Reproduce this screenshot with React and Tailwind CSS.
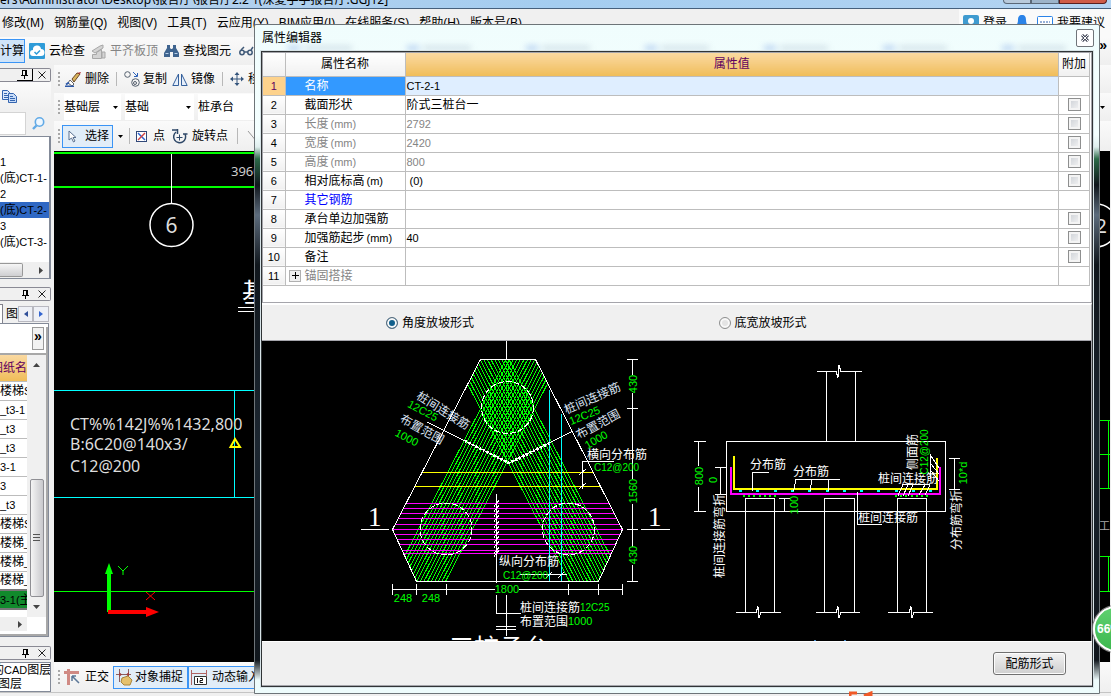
import { useState } from 'react';

const properties = [
  { name: '名称', value: 'CT-2-1', selected: true },
  { name: '截面形状', value: '阶式三桩台一', extra: true },
  { name: '长度', unit: '(mm)', value: '2792', extra: true, muted: true },
  { name: '宽度', unit: '(mm)', value: '2420', extra: true, muted: true },
  { name: '高度', unit: '(mm)', value: '800', extra: true, muted: true },
  { name: '相对底标高', unit: '(m)', value: ' (0)', extra: true },
  { name: '其它钢筋', value: '', link: true },
  { name: '承台单边加强筋', value: '', extra: true },
  { name: '加强筋起步', unit: '(mm)', value: '40', extra: true },
  { name: '备注', value: '', extra: true },
  { name: '锚固搭接', value: '', muted: true, expandable: true },
];

const menus = ['修改(M)', '钢筋量(Q)', '视图(V)', '工具(T)', '云应用(Y)', 'BIM应用(I)', '在线服务(S)', '帮助(H)', '版本号(B)'];
const elements = ['1', '(底)CT-1-', '2', '(底)CT-2-', '3', '(底)CT-3-'];
const sheets = ['楼梯S', '_t3-1', '_t3', '_t3', '3-1', '3', '_t3', '楼梯S', '楼梯_', '楼梯_', '楼梯_', '3-1(主'];

// Latin runs are set a size smaller than the Chinese ones
function Mixed({ children }) {
  return children.split(/([\x20-\x7e]+)/).filter(Boolean).map((part, i) =>
    /^[\x20-\x7e]+$/.test(part)
      ? <span key={i} className="text-[11px] whitespace-pre">{part}</span>
      : <span key={i}>{part}</span>
  );
}

function Grip() {
  return (
    <span className="flex flex-col gap-[2px] shrink-0">
      {[0, 1, 2, 3].map(i => <span key={i} className="w-[2px] h-[2px] bg-[#a8a8a8]" />)}
    </span>
  );
}

function Caret() {
  return <svg width="5" height="3" viewBox="0 0 5 3" className="shrink-0"><path d="M0 0h5L2.500 3z" fill="#000" /></svg>;
}

function PanelHeader({ boxed }) {
  return (
    <div className="h-[14px] shrink-0 flex justify-end items-center gap-[5px] pr-1 border border-l-0 border-[#8a8a94] rounded-r-[2px] bg-[#f0f0f0]">
      <button aria-label="固定" className={boxed ? 'w-4 h-3 flex items-center justify-center border-r border-b border-black' : 'w-4 h-3 flex items-center justify-center'}>
        <svg width="9" height="9" viewBox="0 0 9 9" stroke="#000" fill="none" shapeRendering="crispEdges">
          <path d="M2.500 5V.5h4V5M5.500 1v4M1 5.500h7M4.500 6v3" />
        </svg>
      </button>
      <button aria-label="关闭" className="w-2 h-3 flex items-center">
        <svg width="8" height="8" viewBox="0 0 8 8" stroke="#222"><path d="M.5.5l7 7M7.500.5l-7 7" /></svg>
      </button>
    </div>
  );
}

function Sidebar() {
  return (
    <aside className="w-[51px] shrink-0 flex flex-col pt-[3px] bg-[#f0f0f0] overflow-hidden">
      <PanelHeader boxed />
      <div className="h-7 shrink-0 flex items-center pl-[2px] bg-gradient-to-b from-[#fbfbfb] to-[#f0f0f0]">
        <button aria-label="复制构件">
          <svg width="15" height="13" viewBox="0 0 15 13" stroke="#3465b0">
            <path d="M.5.5h5l2 2v7h-7z" fill="#dbe8fb" /><path d="M2 3.500h3M2 5.500h4M2 7.500h4" />
            <path d="M6.500 3.500h5l3 3v6h-8z" fill="#c8dcf8" /><path d="M8 6.500h3M8 8.500h5M8 10.500h5" />
          </svg>
        </button>
      </div>
      <div className="h-[26px] shrink-0 flex items-center justify-between pr-[6px]">
        <input aria-label="搜索" className="w-[26px] h-[23px] bg-white border border-l-0 border-[#d4d4d4]" />
        <button aria-label="查找">
          <svg width="13" height="13" viewBox="0 0 13 13" fill="none" stroke="#62aae6">
            <circle cx="7.500" cy="5" r="4.200" strokeWidth="1.600" fill="#eef7ff" /><path d="M4.500 8.500L1 12" strokeWidth="2.400" />
          </svg>
        </button>
      </div>
      <div className="h-[143px] shrink-0 flex flex-col border-t border-r-2 border-b border-[#838a98] bg-white">
        <ul className="flex-1 pt-[17px] text-xs leading-4">
          {elements.map((el, i) => (
            <li key={i} className={i === 3 ? 'h-4 whitespace-nowrap overflow-hidden bg-[#2f68c4] text-black' : 'h-4 whitespace-nowrap overflow-hidden'}><Mixed>{el}</Mixed></li>
          ))}
        </ul>
        <div className="h-4 flex items-center justify-between pr-[6px] bg-[#efefef]">
          <span className="w-[23px] h-[14px] border border-l-0 border-[#989898] rounded-r-[2px] bg-gradient-to-b from-[#f6f6f6] to-[#cfcfd2]" />
          <svg width="4" height="7" viewBox="0 0 4 7"><path d="M0 0l4 3.500L0 7z" fill="#444" /></svg>
        </div>
      </div>
      <div className="mt-2 mb-[3px] flex flex-col"><PanelHeader /></div>
      <div className="h-[19px] shrink-0 flex items-center text-xs">
        <span className="w-[3px] h-full border-r border-t border-[#82828c] bg-white" />
        <span className="w-[15px] h-full pl-[3px] pt-[2px] overflow-hidden leading-4">图</span>
        <button aria-label="上一页" className="w-[15px] h-4 flex items-center justify-center border border-[#b8b8c0] bg-[#eef0f6]">
          <svg width="4" height="6" viewBox="0 0 4 6"><path d="M4 0v6L0 3z" fill="#2f4f9a" /></svg>
        </button>
        <button aria-label="下一页" className="w-4 h-4 flex items-center justify-center border border-[#b8b8c0] bg-[#eef0f6]">
          <svg width="4" height="6" viewBox="0 0 4 6"><path d="M0 0v6l4-3z" fill="#3465d0" /></svg>
        </button>
      </div>
      <div className="flex-1 min-h-0 mr-[2px] flex flex-col border-t border-r border-b border-[#838a98] bg-white">
        <div className="h-7 shrink-0 mt-[3px] pr-[2px] flex justify-end border-r-2 border-b-2 border-[#a8a8a8] text-sm font-bold leading-4">
          <button className="w-3 h-[23px] flex justify-center border border-[#9a9a9a] bg-[#f2f2f2]">»</button>
        </div>
        <div className="flex-1 min-h-0 flex border-r-2 border-b-2 border-[#a8a8a8]">
          <div className="w-[27px] flex flex-col overflow-hidden">
            <table className="w-[27px] table-fixed border-collapse text-xs leading-4">
              <thead>
                <tr><th className="h-[26px] p-0 font-normal text-[#600060] bg-gradient-to-b from-[#fad9a0] to-[#f0bd58]"><div className="flex justify-end whitespace-nowrap">图纸名</div></th></tr>
              </thead>
              <tbody>
                {sheets.map((s, i) => (
                  <tr key={i} className="h-[19px] border-t border-[#bcbcbc]">
                    <td className={i === 11 ? 'p-0 bg-[#118a2c] border-y-2 border-[#777]' : 'p-0'}><div className="w-[27px] whitespace-nowrap overflow-hidden"><Mixed>{s}</Mixed></div></td>
                  </tr>
                ))}
              </tbody>
            </table>
            <div className="mt-auto mb-[3px] h-[14px] flex items-center justify-end pr-[5px] bg-[#efefef]">
              <svg width="4" height="7" viewBox="0 0 4 7"><path d="M0 0l4 3.500L0 7z" fill="#444" /></svg>
            </div>
          </div>
          <div className="flex-1 mb-[17px] flex flex-col items-center bg-[#f0f0f0]">
            <svg width="7" height="4" viewBox="0 0 7 4" className="mt-2"><path d="M0 4h7L3.500 0z" fill="#444" /></svg>
            <div className="mt-auto h-[118px] w-[14px] flex items-center justify-center border border-[#8f8f94] rounded-[2px] bg-gradient-to-r from-[#f4f4f4] to-[#c8c8cc]">
              <svg width="7" height="8" viewBox="0 0 7 8" stroke="#555" shapeRendering="crispEdges"><path d="M0 .5h7M0 3.500h7M0 6.500h7" /></svg>
            </div>
            <svg width="7" height="4" viewBox="0 0 7 4" className="my-2"><path d="M0 0h7L3.500 4z" fill="#444" /></svg>
          </div>
        </div>
      </div>
      <div className="mt-[9px] flex flex-col"><PanelHeader /></div>
      <div className="mt-[2px] h-[30px] shrink-0 bg-white border border-l-0 border-[#838a98] text-xs leading-[14px] overflow-hidden whitespace-nowrap">
        <div className="-ml-2"><Mixed>的CAD图层</Mixed></div>
        <div className="-ml-[2px]">图层</div>
      </div>
    </aside>
  );
}

function TopBars() {
  return (
    <>
      <div className="h-2 shrink-0 flex items-end justify-between overflow-hidden bg-gradient-to-r from-[#b9d2ec] via-[#a4cdf0] to-[#b4d4f2]">
        <span className="text-xs leading-4 whitespace-pre [font-family:'Noto_Sans','Noto_Sans_CJK_SC',sans-serif]">{'ers\\Administrator\\Desktop\\报告厅\\报告厅2.2 1(深夏手手报告厅.GGJ12]'}</span>
        <div className="flex h-2 mr-1 pb-1">
          <span className="w-7 border border-t-0 border-[#5a6878] rounded-bl bg-[#b8cadc]" />
          <span className="w-7 border border-t-0 border-[#5a6878] bg-[#9db4ca]" />
          <span className="w-12 border border-t-0 border-[#5a2020] rounded-br bg-[#cf5c48]" />
        </div>
      </div>
      <nav className="h-[29px] shrink-0 flex items-center border-t border-[#46607c] bg-[#f0f0f0] text-xs">
        <div className="flex gap-[10px] pl-[2px] whitespace-nowrap">
          {menus.map(m => <button key={m}>{m}</button>)}
        </div>
        <div className="ml-auto h-full pl-1 pr-[6px] flex items-center gap-1 bg-[#fafafa]">
          <svg width="16" height="16" viewBox="0 0 16 16"><rect width="16" height="16" rx="2" fill="#3f9bd0" /><circle cx="8" cy="6" r="3" fill="#fff" /><path d="M2 15c0-8 12-8 12 0z" fill="#fff" /></svg>
          <button>登录</button>
          <svg width="14" height="16" viewBox="0 0 14 16" className="mx-1"><path d="M7 0c3 0 4 2 4 5s1 5 3 7H0c2-2 3-4 3-7s1-5 4-5z" fill="#2b83e8" /></svg>
          <svg width="16" height="14" viewBox="0 0 16 14"><rect x=".5" y=".5" width="15" height="11" rx="1" fill="#fff" stroke="#2b83e8" /><path d="M3 6h10" stroke="#2b60b0" strokeDasharray="2 1" /></svg>
          <button>我要建议</button>
        </div>
      </nav>
      <div className="h-7 shrink-0 flex items-center gap-1 bg-gradient-to-b from-[#fafafa] to-[#efefef] text-xs whitespace-nowrap">
        <button className="h-6 w-[25px] flex items-center border border-l-0 border-[#3a94f5] bg-[#cfe3f8]">计算</button>
        <button className="flex items-center gap-1">
          <svg width="16" height="16" viewBox="0 0 16 16"><rect width="16" height="16" rx="1" fill="#2e9bd8" /><path d="M4 13a3 3 0 010-6 4 4 0 018-1 3.500 3.500 0 010 7z" fill="#fff" /><path d="M5.500 9l2 2 3.500-3.500" stroke="#2e9bd8" strokeWidth="1.500" fill="none" /></svg>
          云检查
        </button>
        <button className="ml-[2px] flex items-center gap-1 text-[#858585]">
          <svg width="15" height="15" viewBox="0 0 15 15" fill="#d4d4d4" stroke="#a8a8a8"><path d="M1 7l8-5 3-1v3L4 9zM1.500 10.500h4v-2l5-3v9h-9z" /><path d="M11 8h3v6h-3z" /></svg>
          平齐板顶
        </button>
        <button className="ml-[2px] flex items-center gap-1">
          <svg width="15" height="14" viewBox="0 0 15 14" fill="#3f648f"><path d="M3 1h3v3l1 1h1l1-1V1h3v3l3 5v4H9V8H6v5H0V9l3-5z" /><path d="M1.500 9.500h3M10.500 9.500h3" stroke="#b8d0ea" /></svg>
          查找图元
        </button>
        <svg width="16" height="10" viewBox="0 0 16 10" fill="none" stroke="#405a78" strokeWidth="1.500" className="ml-1"><circle cx="3" cy="6.500" r="2.200" /><circle cx="11" cy="6.500" r="2.200" /><path d="M5 6h4M2 4l3-3M12 4l2-3" /></svg>
        <span className="ml-auto mr-1 -mt-3 text-sm font-bold">»</span>
      </div>
    </>
  );
}

function ToolRows() {
  return (
    <div className="shrink-0 flex flex-col text-xs whitespace-nowrap">
      <div className="h-7 flex items-center gap-[5px] pl-1 bg-gradient-to-b from-[#fafafa] to-[#efefef]">
        <Grip />
        <button className="flex items-center gap-[3px]">
          <svg width="17" height="15" viewBox="0 0 17 15"><path d="M7 7l5-6 3 1-6 8z" fill="#d9b35c" stroke="#6b4a28" /><path d="M5 8l4 4-2 2-4-3z" fill="#fff" stroke="#666" /><path d="M0 14.500h9M1 12.500l3-2" stroke="#2e5aa8" strokeWidth="2" /><path d="M12 1l3 1 1-2z" fill="#b03030" /></svg>
          删除
        </button>
        <span className="mx-[2px] w-px h-[14px] bg-[#b8b8b8]" />
        <button className="flex items-center gap-[3px]">
          <svg width="16" height="16" viewBox="0 0 16 16" fill="none" stroke="#55606e"><circle cx="3.500" cy="3.500" r="2.800" /><circle cx="11.500" cy="11.500" r="3.800" /><circle cx="11" cy="12" r="1.500" /><path d="M9 1l4 4M13.500 2v3.500H10" stroke="#2e62b8" /></svg>
          复制
        </button>
        <button className="flex items-center gap-[3px]">
          <svg width="16" height="13" viewBox="0 0 16 13" fill="#e6effb" stroke="#35609c"><path d="M6.500 1v11.500H.8zM9.500 1v11.500h5.700z" /></svg>
          镜像
        </button>
        <span className="mx-[2px] w-px h-[14px] bg-[#b8b8b8]" />
        <button className="flex items-center gap-1">
          <svg width="14" height="14" viewBox="0 0 14 14" fill="#35557c"><path d="M7 0l2.500 3h-2v3.500H11v-2L14 7l-3 2.500v-2H7.500V11h2L7 14l-2.500-3h2V7.500H3v2L0 7l3-2.500v2h3.500V3h-2z" /></svg>
          移动
        </button>
      </div>
      <div className="h-7 flex items-center gap-1 pl-1 bg-gradient-to-b from-[#fafafa] to-[#efefef]">
        <Grip />
        <Picker label="楼层" value="基础层" className="w-[57px]" />
        <Picker label="构件类型" value="基础" className="w-[69px]" />
        <Picker label="构件" value="桩承台" className="w-24" />
        <span className="ml-auto mr-[6px]"><Caret /></span>
      </div>
      <div className="h-[30px] flex items-center gap-[5px] pl-1 bg-gradient-to-b from-[#fafafa] to-[#efefef]">
        <Grip />
        <button className="-ml-[3px] w-[51px] h-[23px] flex items-center gap-2 pl-[5px] border border-[#3a94f5] bg-[#e1edf8]">
          <svg width="9" height="13" viewBox="0 0 9 13"><path d="M1 1v9l2.500-2 2 4 1.500-1-2-3.500H8z" fill="#fff" stroke="#5a7090" /></svg>
          选择
        </button>
        <Caret />
        <span className="mx-px w-px h-4 bg-[#b8b8b8]" />
        <button className="flex items-center gap-[6px]">
          <svg width="11" height="11" viewBox="0 0 11 11"><rect x=".5" y=".5" width="10" height="10" fill="#fff" stroke="#304878" /><path d="M2 2l7 7" stroke="#2e62d0" strokeWidth="1.500" /><path d="M9 2L2 9" stroke="#d04040" strokeWidth="1.500" /></svg>
          点
        </button>
        <button className="flex items-center gap-1 ml-[2px]">
          <svg width="16" height="15" viewBox="0 0 16 15" fill="none" stroke="#2f4868" strokeWidth="1.500"><path d="M4 3a6 6 0 109 2" /><path d="M0 1h6M5.500 0v5M11 5h4.500" /><path d="M7.500 5.500v6M4.500 8.500h6" strokeWidth="1" /></svg>
          旋转点
        </button>
        <span className="mx-1 w-px h-4 bg-[#b8b8b8]" />
        <svg width="10" height="12" viewBox="0 0 10 12" stroke="#999"><path d="M1 1l9 11" /></svg>
      </div>
    </div>
  );
}

function Picker({ label, value, className }) {
  return (
    <div className={`h-[26px] flex items-center bg-white ${className}`}>
      <select aria-label={label} defaultValue={value} className="flex-1 min-w-0 appearance-none bg-transparent outline-none">
        <option>{value}</option>
      </select>
      <span className="pr-[3px]"><Caret /></span>
    </div>
  );
}

function ModelCanvas() {
  return (
    <div className="flex-1 min-h-0 mr-px relative bg-black overflow-hidden">
      <svg width="100%" height="511" className="block [font-family:'Noto_Sans','Noto_Sans_CJK_SC',sans-serif]" fill="none">
        <g shapeRendering="crispEdges">
          <path d="M0 2h1100M0 36h1100" stroke="#0f0" strokeWidth="2" />
          <path d="M117.500 3v49M184 156.500h30M184 160.500h30" stroke="#fff" />
          <path d="M0 239.500h1100M0 346.500h1100M180.500 240v106" stroke="#0ff" />
          <path d="M0 440.500h1100" stroke="#0f0" />
          <path d="M55 461V420" stroke="#0f0" strokeWidth="4" />
          <path d="M54 461h40" stroke="#f00" strokeWidth="4" />
        </g>
        <circle cx="117.500" cy="74" r="21.500" stroke="#fff" strokeWidth="1.500" />
        <path d="M51 423l4-11 4 11z" fill="#0f0" />
        <path d="M92 456l13 5-13 5z" fill="#f00" />
        <path d="M64 415l5 5 5-5M69 420v4" stroke="#0f0" />
        <path d="M92 441l9 8M101 441l-9 8" stroke="#f00" />
        <path d="M176.500 296l4.500-8 5 8z" stroke="#ff0" strokeWidth="2" />
        <text x="117.500" y="82" textAnchor="middle" fontSize="21" fill="#ddd">6</text>
        <text x="177" y="25" fontSize="13" fill="#ccc">3960</text>
        <text x="188" y="151" fontSize="26" fill="#fff">基</text>
        <g fontSize="16" fill="#ddd">
          <text x="16" y="279">CT%%142J%%1432,800</text>
          <text x="16" y="299">B:6C20@140x3/</text>
          <text x="16" y="321">C12@200</text>
        </g>
      </svg>
      <svg width="20" height="511" fill="none" className="absolute right-0 top-0 bg-black [font-family:'Noto_Sans','Noto_Sans_CJK_SC',sans-serif]">
        <circle cx="6" cy="74.500" r="21.500" stroke="#fff" strokeWidth="1.500" />
        <text x="17" y="82" textAnchor="end" fontSize="20" fill="#ddd">12</text>
        <path d="M0 269.500h20M0 303.500h20M0 337.500h20M18.500 269v68M0 405.500h20M0 440.500h20M18.500 405v35" stroke="#0f0" shapeRendering="crispEdges" />
        <text x="9" y="379" fontSize="11" fill="#aaa">工程</text>
      </svg>
    </div>
  );
}

function StatusBar() {
  return (
    <div className="h-[30px] shrink-0 flex items-center pl-1 text-xs whitespace-nowrap bg-gradient-to-b from-[#fafafa] to-[#efefef]">
      <Grip />
      <button className="h-[23px] ml-1 pr-1 flex items-center gap-1">
        <svg width="17" height="17" viewBox="0 0 17 17"><path d="M0 3.500h15M4.500 0v16" stroke="#d08a84" strokeWidth="3" /><path d="M8 7l7 7M8 7v5M8 7h4" stroke="#5c7898" strokeWidth="1.500" /></svg>
        正交
      </button>
      <button className="h-[23px] w-[75px] flex items-center gap-[2px] pl-[2px] border border-[#3a94f5] bg-[#e1edf8]">
        <svg width="17" height="17" viewBox="0 0 17 17"><path d="M0 5.500h15M3.500 0v13M12.500 0v8" stroke="#8a6262" /><path d="M3 3l3 2.500L3 8M13 3l-3 2.500L13 8" fill="#a04040" /><path d="M6 9l6-2 4 4-2 5H8l-3-3z" fill="#e5c16c" stroke="#a8853c" /></svg>
        对象捕捉
      </button>
      <button className="h-[23px] w-24 flex items-center gap-1 pl-[2px] border border-[#3a94f5] bg-[#e1edf8]">
        <svg width="17" height="15" viewBox="0 0 17 15"><path d="M.5 0v15M15.500 0v6M1 3.500h14" stroke="#b06464" /><path d="M3.500 6.500h12v8h-12z" fill="#fff" stroke="#333" /><path d="M6.500 8v5M9 8.500h2.500v2H9v2h3" stroke="#111" fill="none" /></svg>
        动态输入
      </button>
    </div>
  );
}

const OUTLINE = 'M480.500 359.500H535.500L622.500 529.500L598.500 581.500H416.500L392.500 529.500Z';
const hatch = Array.from({ length: 16 }, (_, i) => 506 + i * 3.6);
const stirrups = [503.5, 508.5, 513.5, 518.5, 524.5, 529.5, 534.5, 539.5, 544.5, 550.5, 553.5];

function CapPlan() {
  return (
    <g>
      <defs><clipPath id="cap"><path d={OUTLINE} /></clipPath></defs>
      <g shapeRendering="crispEdges">
        <g clipPath="url(#cap)">
          <g stroke="#0f0">
            {hatch.map(x => <path key={x} d={`M${x} 359.500l-114.500 222M${1015 - x} 359.500l114.500 222`} />)}
          </g>
          <path d="M390 472.500h240M390 486.500h240" stroke="#ff0" />
          <g stroke="#f0f">{stirrups.map(y => <path key={y} d={`M390 ${y}h240`} />)}</g>
          <path d="M549.500 390v192M561.500 414v168" stroke="#0ff" />
        </g>
        <g stroke="#fff">
          <path d={OUTLINE} />
          <g strokeDasharray="6 2">
            <circle cx="507.500" cy="407.500" r="26" /><circle cx="446" cy="529" r="26" /><circle cx="568.500" cy="529" r="26" />
          </g>
          <path d="M506.500 341v18M427 422L509 463L573 431" />
          <path d="M465 441L509 463L550 443" strokeWidth="3" strokeDasharray="2 2" />
          <path d="M614 461.500H582.500V489M579 475l7-6M579 489l7-6" />
          <path d="M627 359.500h11M632.500 359v16M632.500 393v86M627 408.500h11M632.500 504v43M627 529.500h11M632.500 565v16M627 581.500h11" />
          <path d="M361 529.500h28M641 529.500h29" />
          <path d="M496.500 494v89M496.500 595v18.500h24M506.500 595v41M496 626.500h20M496 629.500h20" />
          <path d="M520 574.500h47M546 578l6-6M558 578l6-6" />
          <path d="M392 589.500h103M519 589.500h104M392.500 584v11M416.500 584v11M446.500 584v11M568.500 584v11M598.500 584v11M622.500 584v11" />
          {stirrups.map(y => <path key={y} d={`M494 ${y + 3}l5-6`} />)}
        </g>
      </g>
      <g fill="#fff" fontSize="12">
        <text x="587" y="459">横向分布筋</text>
        <text x="499" y="566">纵向分布筋</text>
        <text x="520" y="612">桩间连接筋</text>
        <text x="520" y="626">布置范围</text>
        <g textAnchor="middle" fill="#dbe4f4">
          <text x="441" y="414" transform="rotate(32 441 414)">桩间连接筋</text>
          <text x="420" y="433" transform="rotate(29 420 433)">布置范围</text>
          <text x="594" y="402" transform="rotate(-24 594 402)">桩间连接筋</text>
          <text x="600" y="428" transform="rotate(-28 600 428)">布置范围</text>
        </g>
      </g>
      <g fill="#fff" fontSize="27" className="[font-family:'Liberation_Serif',serif]">
        <text x="368" y="526">1</text><text x="648" y="526">1</text>
      </g>
      <text x="449" y="657" fontSize="25" fill="#fff">三桩承台</text>
      <g fill="#0f0" fontSize="11">
        <text x="594" y="471" fontSize="10">C12@200</text>
        <text x="503" y="579" fontSize="10">C12@200</text>
        <text x="580" y="611" fontSize="10">12C25</text>
        <text x="568" y="625">1000</text>
        <g textAnchor="middle">
          <text x="507" y="593">1800</text><text x="403" y="602">248</text><text x="431" y="602">248</text>
          <text x="421" y="414" transform="rotate(28 421 414)">12C25</text>
          <text x="405" y="441" transform="rotate(28 405 441)">1000</text>
          <text x="586" y="419" transform="rotate(-22 586 419)">12C25</text>
          <text x="598" y="443" transform="rotate(-30 598 443)">1000</text>
          <text x="637" y="384" transform="rotate(-90 637 384)">430</text>
          <text x="637" y="491" transform="rotate(-90 637 491)">1560</text>
          <text x="637" y="555" transform="rotate(-90 637 555)">430</text>
        </g>
      </g>
    </g>
  );
}

function CapSection() {
  return (
    <g>
      <g shapeRendering="crispEdges" stroke="#fff">
        <path d="M817 371.500h19l2 6 1-12 2 6h21M826.500 372v69M855.500 372v69" />
        <path d="M726.500 441.500h219v70h-219z" />
        <path d="M745.500 612V498.500h29V612M824.500 612V498.500h30V612M897.500 612V498.500h29V612" />
        <path d="M736 612.500h20l2-6 1 11 2-5h20M816 612.500h20l2-6 1 11 2-5h19M888 612.500h21l2-6 1 11 2-5h19" />
        <path d="M734 456v33h203v-31" stroke="#ff0" strokeWidth="2" />
        <path d="M731 467v27h209v-27" stroke="#f0f" strokeWidth="2" />
        <path d="M739 491h200" stroke="#0ff" strokeWidth="2" strokeDasharray="3 14.3" />
        <path d="M743 496h34M895 496h34" stroke="#0f0" strokeWidth="2" strokeDasharray="2 3.200" />
        <path d="M698.500 441v25M698.500 487v24M694 441.500h12M694 511.500h12M720.500 467v27M715 467.500h11M715 494.500h11" />
        <path d="M954.500 458v32M949 458.500h11M949 489.500h11M784.500 498v13M779 498.500h11" />
        <path d="M769 472.500H752.500V491M840 479.500H796L793.500 491M812 480l-2 11M829 480l-1 11" />
        <path d="M857.500 492v32.500H882M930 484.500h-27l-5 11M908 485l-5 11M913 485l-5 11M925 485l-6 10M930 485l-5 10" />
        <path d="M930.500 454v24M931 456l8 12M931 464l8 10M931 471l8 10" />
      </g>
      <g fill="#fff" fontSize="12">
        <text x="750" y="469">分布筋</text>
        <text x="793" y="476">分布筋</text>
        <text x="878" y="483">桩间连接筋</text>
        <text x="858" y="522">桩间连接筋</text>
        <g textAnchor="middle">
          <text x="724" y="536" transform="rotate(-90 724 536)">桩间连接筋弯折</text>
          <text x="961" y="520" transform="rotate(-90 961 520)">分布筋弯折</text>
          <text x="917" y="452" transform="rotate(-90 917 452)">侧面筋</text>
        </g>
      </g>
      <g fill="#0f0" fontSize="11" textAnchor="middle">
        <text x="703" y="476" transform="rotate(-90 703 476)">800</text>
        <text x="717" y="480" transform="rotate(-90 717 480)">0</text>
        <text x="798" y="505" transform="rotate(-90 798 505)">100</text>
        <text x="967" y="473" transform="rotate(-90 967 473)">10*d</text>
        <text x="928" y="452" fontSize="10" transform="rotate(-90 928 452)">C12@200</text>
      </g>
      <path d="M814 640.500h2M844 640.500h2" stroke="#4a90d0" />
    </g>
  );
}

function PropertyTable() {
  return (
    <table className="w-full table-fixed border-collapse text-xs leading-4 bg-white">
      <colgroup><col className="w-[22px]" /><col className="w-[120px]" /><col /><col className="w-[31px]" /></colgroup>
      <thead>
        <tr className="h-[23px]">
          <th className="border-r border-b border-[#bdbdbd] bg-gradient-to-b from-white to-[#f0f0f0]" />
          <th className="p-0 font-normal border-r border-b border-[#bdbdbd] bg-gradient-to-b from-white to-[#f0f0f0]">属性名称</th>
          <th className="p-0 font-normal text-[#600060] border-r border-b border-[#bdbdbd] bg-gradient-to-b from-[#fad9a0] to-[#f0bd58]">属性值</th>
          <th className="p-0 font-normal whitespace-nowrap border-r border-b border-[#bdbdbd] bg-gradient-to-b from-white to-[#f0f0f0]">附加</th>
        </tr>
      </thead>
      <tbody>
        {properties.map((p, i) => (
          <tr key={p.name} className={`h-[19px] ${p.muted ? 'text-[#858585]' : 'text-black'}`}>
            <td className={`p-0 text-[11px] text-center border-r border-b border-[#bdbdbd] ${p.selected ? 'bg-[#fdd28c] text-[#600060]' : 'bg-gradient-to-b from-white to-[#f0f0f0] text-black'}`}>{i + 1}</td>
            <td className={`p-0 border-r border-b border-[#bdbdbd] ${p.selected ? 'bg-[#3399ff] text-white' : ''} ${p.link ? 'text-[#0000ff]' : ''}`}>
              <div className="flex items-center">
                <span className="w-[19px] flex justify-center">
                  {p.expandable && (
                    <button aria-label="展开" className="w-3 h-3 flex items-center justify-center border border-[#b0b0b0] bg-[#f0f0f0]">
                      <svg width="7" height="7" viewBox="0 0 7 7" stroke="#000" shapeRendering="crispEdges"><path d="M0 3.500h7M3.500 0v7" /></svg>
                    </button>
                  )}
                </span>
                <span>{p.name}{p.unit && <span className="text-[11px] pl-[2px]">{p.unit}</span>}</span>
              </div>
            </td>
            <td className={`p-0 pl-px border-r border-b border-[#bdbdbd] ${p.selected ? 'bg-[#dfeeff]' : ''}`}><Mixed>{p.value}</Mixed></td>
            <td className="p-0 border-r border-b border-[#bdbdbd]">
              {p.extra && (
                <input type="checkbox" aria-label={`附加 ${p.name}`} className="appearance-none block mx-auto w-[13px] h-[13px] border border-[#8e8f8f] bg-gradient-to-br from-[#cbcfd5] to-[#f6f6f6] shadow-[inset_0_0_0_2px_#f4f4f4] checked:bg-[#3399ff]" />
              )}
            </td>
          </tr>
        ))}
      </tbody>
    </table>
  );
}

function SlopeOption({ label, checked, onChange }) {
  return (
    <label className="flex items-center gap-1">
      <input type="radio" name="slope" checked={checked} onChange={onChange}
        className="appearance-none w-3 h-3 rounded-full border border-[#8e8f8f] bg-[#e4e4e4] shadow-[inset_0_0_0_2px_#f8f8f8] checked:bg-[#12608c] checked:border-[#5c6f80]" />
      {label}
    </label>
  );
}

function PropertyDialog() {
  const [slope, setSlope] = useState('angle');
  return (
    <div role="dialog" aria-label="属性编辑器" className="absolute left-[254px] right-[11px] top-6 bottom-[2px] flex flex-col px-[5px] pb-[5px] border border-[#6d7478] rounded-t-[2px] bg-[linear-gradient(to_bottom,#f0fdfd_0,#f4ffff_110px,#dfeeee_122px,#2c6a48_134px,#10161c_160px,#5c6b7c_190px,#10161c_240px,#1c2630_420px,#10161c_635px,#eefcfc_655px)]">
      <div className="h-[25px] shrink-0 relative flex items-center justify-between overflow-hidden pl-[2px] text-xs">
        <div className="absolute inset-x-0 bottom-0 h-1 flex justify-around blur-[3px] opacity-60">
          {[0, 1, 2, 3, 4, 5, 6].map(i => <span key={i} className="w-16 flex gap-1"><i className="w-3 bg-[#7ca4e4]" /><i className="flex-1 bg-[#b4c6d4]" /></span>)}
        </div>
        <h2 className="relative">属性编辑器</h2>
        <button aria-label="关闭" className="relative w-[18px] h-[18px] flex items-center justify-center bg-white border border-[#70757a] rounded-[2px]">
          <svg width="8" height="8" viewBox="0 0 8 8"><path d="M1 1l6 6M7 1L1 7" stroke="#4a4f5e" strokeWidth="3" /><path d="M1 1l6 6M7 1L1 7" stroke="#fff" /></svg>
        </button>
      </div>
      <div className="flex-1 min-h-0 flex flex-col border border-[#d8e4e8]">
        <div className="flex-1 min-h-0 flex flex-col border border-[#303436] bg-[#f0f0f0]">
          <div className="pr-px shrink-0 border border-[#a5a5ab] bg-white h-[251px]"><PropertyTable /></div>
          <div className="h-[37px] shrink-0 flex items-center pt-px border-r border-t-2 border-t-white border-r-[#a5a5ab] text-xs">
            <div className="w-2/5 pl-[124px]"><SlopeOption label="角度放坡形式" checked={slope === 'angle'} onChange={() => setSlope('angle')} /></div>
            <div className="flex-1 pl-[125px]"><SlopeOption label="底宽放坡形式" checked={slope === 'width'} onChange={() => setSlope('width')} /></div>
          </div>
          <div className="flex-1 min-h-0 bg-black overflow-hidden border-t border-r border-[#a5a5ab]">
            <svg width="829" height="300" viewBox="262 341 829 300" fill="none" className="block">
              <CapPlan />
              <CapSection />
            </svg>
          </div>
          <div className="h-[45px] shrink-0 flex items-center justify-end pr-[26px] border-t border-t-white border-b border-b-[#a5a5ab]">
            <button className="w-[73px] h-[23px] text-xs border border-[#707070] rounded-[3px] bg-gradient-to-b from-[#f2f2f2] to-[#cfcfcf] shadow-[inset_0_0_0_1px_#fcfcfc]">配筋形式</button>
          </div>
        </div>
      </div>
    </div>
  );
}

export default function App() {
  return (
    <div className="relative h-screen flex flex-col overflow-hidden bg-[#f0f0f0] text-black [font-family:'Liberation_Sans','Noto_Sans_CJK_SC',sans-serif]">
      <TopBars />
      <div className="flex-1 min-h-0 flex">
        <Sidebar />
        <main className="flex-1 min-w-0 ml-[3px] flex flex-col">
          <ToolRows />
          <ModelCanvas />
          <StatusBar />
        </main>
      </div>
      <div className="h-1 shrink-0 border-t border-[#c4c4c4] bg-[#f0f0f0]" />
      <PropertyDialog />
      <svg width="24" height="5" viewBox="0 0 24 5" className="absolute bottom-0 left-[849px]"><path d="M1 5V2h7M15 5l7-3v3" stroke="#f05a28" strokeWidth="3" fill="none" /></svg>
      <div className="absolute -right-7 bottom-[44px] w-[46px] h-[46px] rounded-full border-2 border-white bg-gradient-to-b from-[#5fd070] to-[#3cb84e] shadow-[0_0_0_1px_#808080] flex items-center pl-[2px] text-xs font-bold text-white">66%</div>
    </div>
  );
}
